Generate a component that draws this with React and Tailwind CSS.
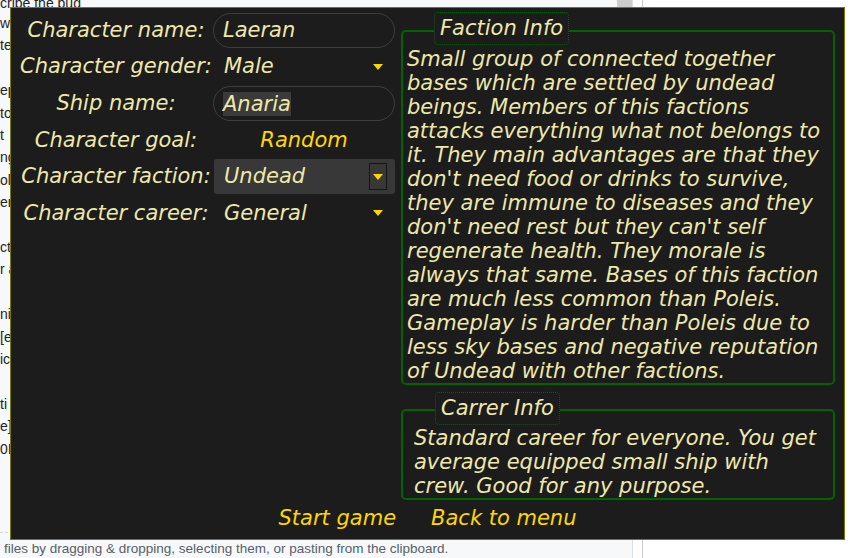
const pageLines = ["w", "te", "", "ep", "to", "t", "ng", "oll", "er", "", "ct", "r a", "", "ni", "[e", "ic", "", "ti", "e]", "0I"];

const factionText = [
  "Small group of connected together",
  "bases which are settled by undead",
  "beings. Members of this factions",
  "attacks everything what not belongs to",
  "it. They main advantages are that they",
  "don't need food or drinks to survive,",
  "they are immune to diseases and they",
  "don't need rest but they can't self",
  "regenerate health. They morale is",
  "always that same. Bases of this faction",
  "are much less common than Poleis.",
  "Gameplay is harder than Poleis due to",
  "less sky bases and negative reputation",
  "of Undead with other factions.",
];

const careerText = [
  "Standard career for everyone. You get",
  "average equipped small ship with",
  "crew. Good for any purpose.",
];

function Arrow() {
  return (
    <svg width="10" height="6" viewBox="0 0 10 6">
      <polygon points="0,0 10,0 5,6" fill="#ffd700" />
    </svg>
  );
}

function Label({ children }) {
  return (
    <div className="w-[194px] flex items-center justify-center whitespace-nowrap">
      {children}
    </div>
  );
}

function Entry({ value, selected }) {
  return (
    <div className="w-[182px] h-[35px] rounded-full border border-[#3e3e3e] flex items-center pl-[9px]">
      <span className={selected ? "bg-[#3a3a3a] leading-[24px]" : ""}>{value}</span>
    </div>
  );
}

function Combo({ value, active }) {
  return (
    <div
      className={
        "w-[181px] h-[35px] ml-[1px] flex items-center justify-between pl-[10px] pr-[8px] rounded-[3px] " +
        (active ? "bg-[#383838]" : "")
      }
    >
      <span>{value}</span>
      <div
        className={
          "w-[18px] h-[27px] flex items-center justify-center " +
          (active ? "border border-[#161616]" : "")
        }
      >
        <Arrow />
      </div>
    </div>
  );
}

function Frame({ title, lines, pad, legendLeft, legendTop }) {
  return (
    <div className="relative" style={{ paddingTop: legendTop }}>
      <div className={"border-2 border-[#006400] rounded-[5px] pt-[15px] " + pad}>
        {lines.map((l, i) => (
          <div key={i} className="leading-[24px] whitespace-nowrap">
            {l}
          </div>
        ))}
      </div>
      <div
        className="absolute top-0 h-[33px] flex items-center px-[5px] bg-[#1c1c1c] border border-dotted border-[#006400] rounded-[4px] whitespace-nowrap"
        style={{ left: legendLeft }}
      >
        {title}
      </div>
    </div>
  );
}

export default function App() {
  return (
    <div className="relative w-[850px] h-[558px] overflow-hidden bg-white flex font-['Liberation_Sans',Arial,sans-serif] text-[#1f2328]">
      <div className="w-[617px] h-full bg-[#f6f8fa] flex flex-col">
        <div className="flex-1 text-[14px]">
          <div className="-mt-[5px] leading-[16px] whitespace-nowrap">cribe the bug</div>
          <div className="mt-[1px]">
            {pageLines.map((l, i) => (
              <div key={i} className="h-[22.42px] leading-[22.42px] whitespace-nowrap">
                {l}
              </div>
            ))}
          </div>
        </div>
        <div className="h-[26px] border-t border-dashed border-[#d0d7de] pl-[4px] pt-[7px] text-[13.5px] leading-[17px] text-[#57606a] whitespace-nowrap">
          files by dragging &amp; dropping, selecting them, or pasting from the clipboard.
        </div>
      </div>
      <div className="w-[15px] h-full bg-[#f6f8fa]">
        <div className="h-[22px] bg-[#cdcdcd]" />
      </div>
      <div className="w-[10px] h-full border-l border-[#d8dee4]" />
      <div className="flex-1 h-full border-l border-[#c8ccd0] bg-white" />

      <div className="absolute left-[10px] top-[7px] w-[835px] h-[533px] border border-[#7a7a00] bg-[#1c1c1c] flex flex-col font-['DejaVu_Sans',Verdana,sans-serif] italic text-[21px] text-[#eee8aa]">
        <div className="flex">
          <div className="w-[384px] pl-[8px] pt-[5px] flex flex-col gap-[1.6px]">
            <div className="flex h-[35px]">
              <Label>Character name:</Label>
              <Entry value="Laeran" />
            </div>
            <div className="flex h-[35px]">
              <Label>Character gender:</Label>
              <Combo value="Male" />
            </div>
            <div className="flex h-[35px]">
              <Label>Ship name:</Label>
              <Entry value="Anaria" selected />
            </div>
            <div className="flex h-[35px]">
              <Label>Character goal:</Label>
              <div className="w-[182px] flex items-center justify-center text-[#ffd700]">Random</div>
            </div>
            <div className="flex h-[35px]">
              <Label>Character faction:</Label>
              <Combo value="Undead" active />
            </div>
            <div className="flex h-[35px]">
              <Label>Character career:</Label>
              <Combo value="General" />
            </div>
          </div>
          <div className="ml-[6px] w-[434px] pt-[4px] flex flex-col gap-[7px]">
            <Frame title="Faction Info" lines={factionText} pad="pl-[4px]" legendLeft="33px" legendTop="18px" />
            <Frame title="Carrer Info" lines={careerText} pad="pl-[11px]" legendLeft="34px" legendTop="17px" />
          </div>
        </div>
        <div className="flex justify-center gap-[35px] mt-[5px] text-[#ffd700] leading-[26px]">
          <span>Start game</span>
          <span>Back to menu</span>
        </div>
      </div>
    </div>
  );
}
